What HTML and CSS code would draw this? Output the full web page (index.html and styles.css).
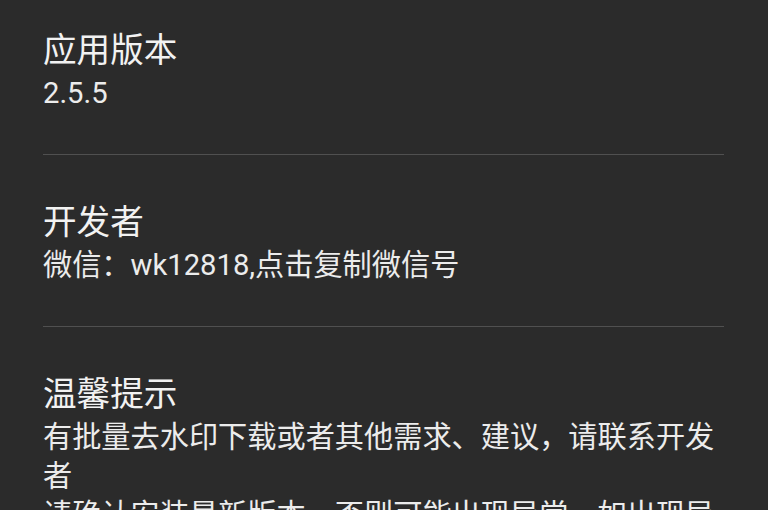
FILE: index.html
```html
<!DOCTYPE html>
<html lang="zh-CN">
<head>
<meta charset="utf-8">
<title>关于</title>
<link rel="stylesheet" href="styles.css">
</head>
<body>
<div class="list">
  <div class="item">
    <div class="title">应用版本</div>
    <div class="sub">2.5.5</div>
  </div>
  <div class="item">
    <div class="title">开发者</div>
    <div class="sub">微信：wk12818,点击复制微信号</div>
  </div>
  <div class="item">
    <div class="title">温馨提示</div>
    <div class="sub">有批量去水印下载或者其他需求、建议，请联系开发者<br>请确认安装最新版本，否则可能出现异常，如出现异常请联系开发者</div>
  </div>
</div>
</body>
</html>
```

FILE: styles.css
```css
html, body {
  margin: 0;
  padding: 0;
  background: #2b2b2b;
  height: 100%;
  overflow: hidden;
}
body {
  font-family: Roboto, "Noto Sans CJK SC", sans-serif;
  color: #efefef;
}
.list {
  margin-top: -17px;
  padding: 0 44px 0 43px;
}
.item {
  padding: 45px 0 41px;
  border-bottom: 1px solid #505050;
}
.title {
  font-size: 33.6px;
  line-height: 46px;
  color: #f2f2f2;
}
.sub {
  font-size: 29.2px;
  line-height: 39px;
  color: #ececec;
}
```
